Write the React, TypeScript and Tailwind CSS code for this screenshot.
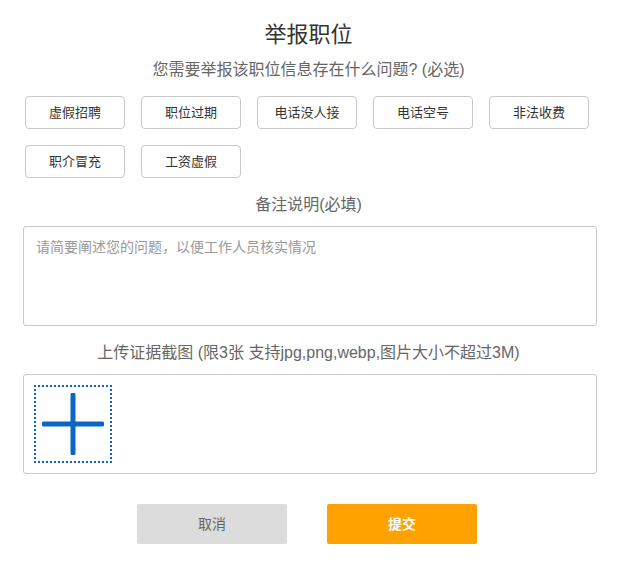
import React from "react";

const options = ["虚假招聘", "职位过期", "电话没人接", "电话空号", "非法收费", "职介冒充", "工资虚假"];

export default function App() {
  return (
    <div
      className="w-[617px] h-[575px] bg-white flex flex-col items-center"
      style={{ fontFamily: '"Liberation Sans", "Noto Sans CJK SC", sans-serif' }}
    >
      <h1 className="mt-[20px] h-[30px] leading-[30px] text-[22px] text-[#333] font-normal">举报职位</h1>
      <p className="mt-[8px] h-[24px] leading-[24px] text-[16px] text-[#666]">您需要举报该职位信息存在什么问题? (必选)</p>

      <div className="mt-[14px] w-[574px] pl-[2px] grid grid-cols-[repeat(5,100px)] gap-x-[16px] gap-y-[16px] self-start ml-[23px]">
        {options.map((o) => (
          <button
            key={o}
            className="h-[33px] rounded-[4px] border border-[#c8c8c8] bg-white text-[13px] text-[#333] flex items-center justify-center"
          >
            {o}
          </button>
        ))}
      </div>

      <p className="mt-[15px] h-[24px] leading-[24px] text-[16px] text-[#666]">备注说明(必填)</p>
      <textarea
        className="mt-[9px] self-start ml-[23px] w-[574px] h-[100px] rounded-[3px] border border-[#c8c8c8] px-[12px] pt-[10px] text-[14px] leading-[20px] text-[#333] placeholder:text-[#999] resize-none outline-none"
        placeholder="请简要阐述您的问题，以便工作人员核实情况"
      />

      <p className="mt-[15px] h-[24px] leading-[24px] text-[16px] text-[#666]">
        上传证据截图 (限3张 支持jpg,png,webp,图片大小不超过3M)
      </p>
      <div className="mt-[9px] self-start ml-[23px] w-[574px] h-[100px] rounded-[3px] border border-[#c8c8c8] p-[10px]">
        <div className="w-[78px] h-[78px] border-2 border-dotted border-[#0b67c2] flex items-center justify-center">
          <svg width="62" height="62" viewBox="0 0 62 62">
            <line x1="31" y1="2" x2="31" y2="60" stroke="#0b67c2" strokeWidth="5" strokeLinecap="round" />
            <line x1="2" y1="31" x2="60" y2="31" stroke="#0b67c2" strokeWidth="5" strokeLinecap="round" />
          </svg>
        </div>
      </div>

      <div className="mt-[30px] flex gap-[40px] self-start ml-[137px]">
        <button className="w-[150px] h-[40px] rounded-[2px] bg-[#dcdcdc] text-[14px] text-[#666]">取消</button>
        <button className="w-[150px] h-[40px] rounded-[2px] bg-[#ffa200] text-[14px] text-white font-bold">提交</button>
      </div>
    </div>
  );
}
